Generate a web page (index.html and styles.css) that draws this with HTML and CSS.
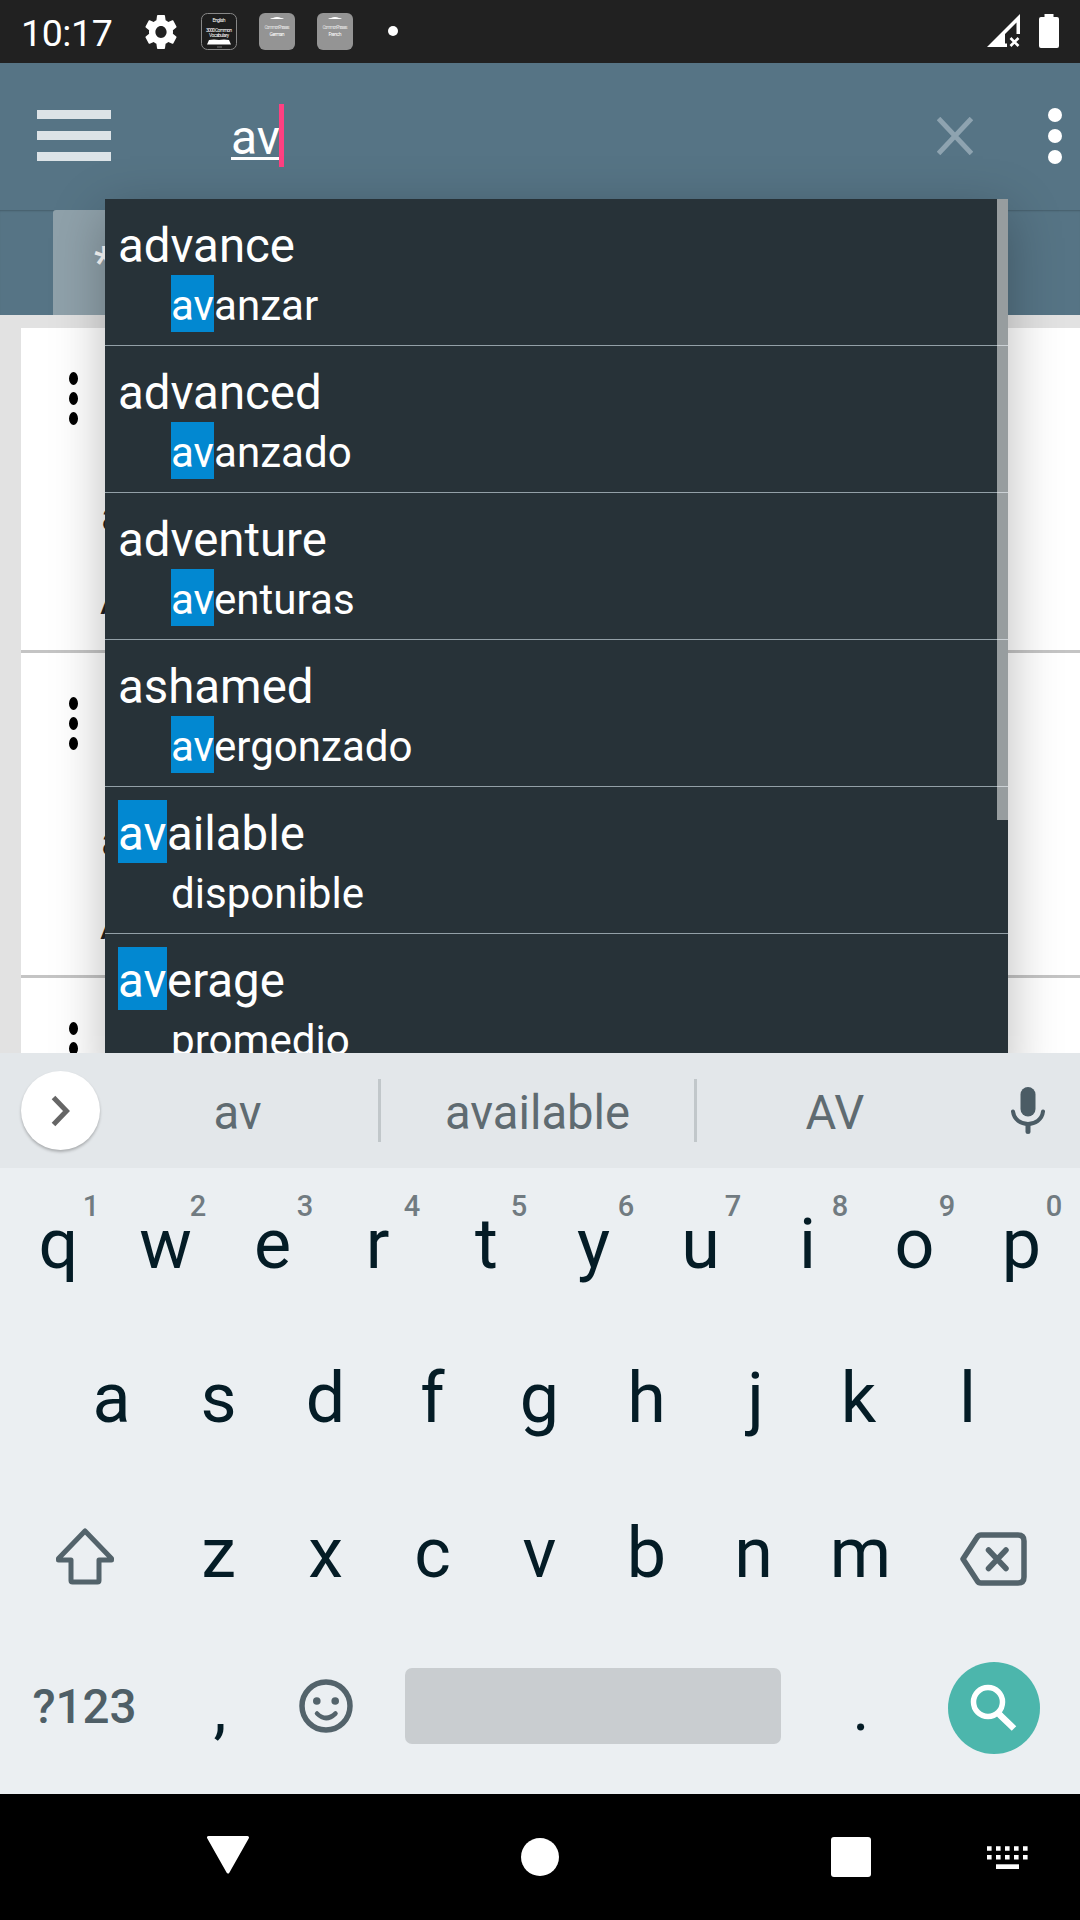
FILE: index.html
```html
<!DOCTYPE html>
<html lang="en">
<head>
<meta charset="utf-8">
<title>Vocabulary search</title>
<link rel="stylesheet" href="styles.css">
</head>
<body>
<div class="screen">
  <header class="status">
    <span class="clock">10:17</span>
    <svg class="gear" viewBox="2 2 20 20" preserveAspectRatio="none"><path fill="#fff" d="M19.43 12.98c.04-.32.07-.64.07-.98s-.03-.66-.07-.98l2.11-1.65c.19-.15.24-.42.12-.64l-2-3.46c-.12-.22-.39-.3-.61-.22l-2.49 1c-.52-.4-1.08-.73-1.69-.98l-.38-2.65C14.46 2.18 14.25 2 14 2h-4c-.25 0-.46.18-.49.42l-.38 2.65c-.61.25-1.17.59-1.69.98l-2.49-1c-.23-.09-.49 0-.61.22l-2 3.46c-.13.22-.07.49.12.64l2.11 1.65c-.04.32-.07.65-.07.98s.03.66.07.98l-2.11 1.65c-.19.15-.24.42-.12.64l2 3.46c.12.22.39.3.61.22l2.49-1c.52.4 1.08.73 1.69.98l.38 2.65c.03.24.24.42.49.42h4c.25 0 .46-.18.49-.42l.38-2.65c.61-.25 1.17-.59 1.69-.98l2.49 1c.23.09.49 0 .61-.22l2-3.46c.12-.22.07-.49-.12-.64l-2.11-1.65zM12 15.5c-1.93 0-3.5-1.57-3.5-3.5s1.57-3.5 3.5-3.5 3.5 1.57 3.5 3.5-1.57 3.5-3.5 3.5z"/></svg>
    <svg class="note" viewBox="0 0 36 37"><rect x=".5" y=".5" width="35" height="36" rx="6" fill="#1d1d1d" stroke="#888"/><g class="tiny"><text x="18" y="8.5" textLength="13">English</text><text x="18" y="18.5" textLength="26">3000 Common</text><text x="18" y="24" textLength="20">Vocabulary</text></g><path fill="#fff" d="M8 27q5-1 10 0q5-1 10 0l2 4.500H6z"/><path stroke="#777" d="M16 34h5"/></svg>
    <svg class="note" viewBox="0 0 36 37"><rect width="36" height="37" rx="6" fill="#949494"/><path fill="#fff" d="M11 6q1-1 3-1q4-2 8 0q2 0 3 1z"/><g class="tiny"><text x="18" y="15.500" textLength="25" opacity=".7">Common Phrases</text><text x="18" y="22.500" textLength="15">German</text></g></svg>
    <svg class="note" viewBox="0 0 36 37"><rect width="36" height="37" rx="6" fill="#949494"/><path fill="#fff" d="M11 6q1-1 3-1q4-2 8 0q2 0 3 1z"/><g class="tiny"><text x="18" y="15.500" textLength="25" opacity=".7">Common Phrases</text><text x="18" y="22.500" textLength="13">French</text></g></svg>
    <i class="more-dot"></i>
    <svg class="signal" viewBox="0 0 33 33"><path fill="#fff" fill-rule="evenodd" d="M33 0V20H29.500V8.500L18 20V29.500H20V33H0z"/><path stroke="#fff" stroke-width="2.600" d="M23.500 24l8 8m0-8l-8 8"/></svg>
    <svg class="battery" viewBox="0 0 20 34"><path fill="#fff" d="M5.500 0h9v3H18q2 0 2 2v27q0 2-2 2H2q-2 0-2-2V5q0-2 2-2h3.500z"/></svg>
  </header>

  <main class="app">
    <div class="toolbar">
      <div class="burger"><i></i><i></i><i></i></div>
      <div class="query"><span>av</span><i class="caret"></i></div>
      <svg class="clear" viewBox="0 0 36 38"><path stroke="#8ea3b0" stroke-width="5" d="M1.500 1.500l33 35m0-35l-33 35"/></svg>
      <div class="overflow"><i></i><i></i><i></i></div>
    </div>
    <div class="tabs"><div class="tab">*</div></div>
    <div class="list">
      <div class="entry"><div class="dots"><i></i><i></i><i></i></div><p class="word">a</p><p class="word second">A</p></div>
      <div class="entry"><div class="dots"><i></i><i></i><i></i></div><p class="word">a</p><p class="word second">A</p></div>
      <div class="entry"><div class="dots"><i></i><i></i><i></i></div></div>
    </div>
    <div class="popup">
      <div class="row"><p class="en">advance</p><p class="es"><mark>av</mark>anzar</p></div>
      <div class="row"><p class="en">advanced</p><p class="es"><mark>av</mark>anzado</p></div>
      <div class="row"><p class="en">adventure</p><p class="es"><mark>av</mark>enturas</p></div>
      <div class="row"><p class="en">ashamed</p><p class="es"><mark>av</mark>ergonzado</p></div>
      <div class="row"><p class="en"><mark>av</mark>ailable</p><p class="es">disponible</p></div>
      <div class="row"><p class="en"><mark>av</mark>erage</p><p class="es">promedio</p></div>
      <i class="thumb"></i>
    </div>
  </main>

  <section class="keyboard">
    <div class="suggest">
      <div class="expand"><svg viewBox="0 0 20 32"><path fill="none" stroke="#666" stroke-width="5" d="M2.500 2.500L15.500 16L2.500 29.500"/></svg></div>
      <span>av</span><i></i><span>available</span><i></i><span>AV</span>
      <svg class="mic" viewBox="0 0 34 48"><rect x="9.500" y="0" width="15" height="29.500" rx="7.500" fill="#4b5c65"/><path fill="none" stroke="#4b5c65" stroke-width="4" stroke-linecap="round" d="M2 24.500C4 41 30 41 32 24.500"/><path stroke="#4b5c65" stroke-width="5" stroke-linecap="round" d="M17 38v6.500"/></svg>
    </div>
    <div class="keys">
      <div class="krow ten"><b>q<sup>1</sup></b><b>w<sup>2</sup></b><b>e<sup>3</sup></b><b class="r">r<sup>4</sup></b><b>t<sup>5</sup></b><b>y<sup>6</sup></b><b>u<sup>7</sup></b><b>i<sup>8</sup></b><b>o<sup>9</sup></b><b>p<sup>0</sup></b></div>
      <div class="krow nine"><b>a</b><b>s</b><b>d</b><b>f</b><b>g</b><b>h</b><b class="j">j</b><b class="k">k</b><b>l</b></div>
      <div class="krow mixed">
        <b><svg class="shift" viewBox="0 0 60 58"><path fill="none" stroke="#53636b" stroke-width="5" stroke-linejoin="round" d="M30 4L3.500 31.500V33H16V53.500Q16 55 17.500 55H42.500Q44 55 44 53.500V33H56.500V31.500z"/></svg></b>
        <b>z</b><b>x</b><b>c</b><b>v</b><b>b</b><b>n</b><b>m</b>
        <b><svg class="back" viewBox="0 0 67 54"><path fill="none" stroke="#53636b" stroke-width="5.500" stroke-linejoin="round" d="M3 27L17 5.500Q18.500 3 21 3H58Q64 3 64 9V45Q64 51 58 51H21Q18.500 51 17 48.500zM28.500 18L46 36.500M46 18L28.500 36.500" stroke-linecap="round"/></svg></b>
      </div>
      <div class="krow bottom">
        <b class="sym">?123</b>
        <b class="comma">,</b>
        <b><svg class="smile" viewBox="0 0 54 54"><circle cx="27" cy="27" r="24" fill="none" stroke="#53636b" stroke-width="5.500"/><circle cx="17.800" cy="22" r="3.800" fill="#53636b"/><circle cx="36.200" cy="22" r="3.800" fill="#53636b"/><path fill="none" stroke="#53636b" stroke-width="4.500" stroke-linecap="round" d="M18 34.500Q27 43.500 36.500 34.500"/></svg></b>
        <b class="space"></b>
        <b class="period">.</b>
        <b class="go"><svg viewBox="0 0 92 92"><circle cx="40" cy="40" r="14.500" fill="none" stroke="#fff" stroke-width="5.500"/><path stroke="#fff" stroke-width="6.500" d="M49.500 50l3 3.500L66 66.500"/></svg></b>
      </div>
    </div>
  </section>

  <nav class="nav">
    <svg class="navback" viewBox="0 0 42 38"><path fill="#fff" stroke="#fff" stroke-width="3" stroke-linejoin="round" d="M1.500 1.500h39L21 36z"/></svg>
    <i class="home"></i>
    <i class="recent"></i>
    <svg class="ime" viewBox="0 0 41 23"><path fill="none" stroke="#fff" stroke-width="4.600" stroke-dasharray="4.600 4.400" d="M0 2.500h41M0 11.300h41"/><path fill="#fff" d="M9 18.300h23V23H9z"/></svg>
  </nav>
</div>
</body>
</html>
```
FILE: styles.css
```css
* { box-sizing: border-box; }
body { margin: 0; font-family: Roboto, "Liberation Sans", sans-serif; }
p { margin: 0; }
i { display: block; font-style: normal; }
svg { display: block; flex: none; }

.screen { width: 1080px; height: 1920px; display: flex; flex-direction: column; overflow: hidden; }

/* Status bar */
.status { height: 63px; flex: none; background: #212121; display: flex; align-items: flex-start; padding: 0 21px 0 21px; }
.clock { width: 124px; color: #fff; font-size: 37.500px; letter-spacing: -.4px; line-height: 66px; }
.gear { width: 32px; height: 34px; margin: 15px 24px 0 0; }
.note { width: 36px; height: 37px; margin: 13px 22px 0 0; }
.tiny { fill: #fff; font-size: 5px; text-anchor: middle; }
.more-dot { width: 10px; height: 10px; border-radius: 50%; background: #fff; margin: 26px auto 0 13px; }
.signal { width: 33px; height: 33px; margin: 14px 19px 0 0; }
.battery { width: 20px; height: 34px; margin-top: 14px; }

/* App */
.app { position: relative; height: 990px; flex: none; overflow: hidden; display: flex; flex-direction: column; background: #e2e2e2; }
.toolbar { height: 147px; flex: none; background: #567485; display: flex; padding-left: 37px; box-shadow: 0 1px 3px rgba(0, 0, 0, .2); }
.burger { width: 74px; margin: 47px 120px 0 0; display: flex; flex-direction: column; gap: 12px; }
.burger i { height: 9px; background: #dce3e7; }
.query { display: flex; margin-top: 41px; color: #fff; font-size: 48px; line-height: 68px; }
.query span { height: 56px; border-bottom: 3px solid #fff; }
.caret { width: 5px; height: 63px; background: #ff4081; margin-left: -1px; }
.clear { width: 36px; height: 38px; margin: 54px 75px 0 auto; }
.overflow { width: 14px; margin: 45px 18px 0 0; display: flex; flex-direction: column; gap: 7px; }
.overflow i { width: 14px; height: 14px; border-radius: 50%; background: #fff; }
.tabs { height: 105px; flex: none; background: #567485; padding-left: 53px; display: flex; box-shadow: inset 0 2px 2px -1px rgba(0, 0, 0, .2); }
.tab { width: 300px; background: #8fa1aa; border-radius: 3px 3px 0 0; color: #fff; font-size: 44px; font-weight: 500; line-height: 107px; padding-left: 41px; }
.list { margin: 13px 0 0 21px; display: flex; flex-direction: column; gap: 3px; background: #c4c4c4; flex: none; }
.entry { height: 322px; background: #fff; padding: 44px 0 0 48px; color: #222; }
.dots { display: flex; flex-direction: column; gap: 7px; height: 115px; }
.dots i { width: 9px; height: 13px; border-radius: 50%; background: #000; }
.word { font-size: 42px; line-height: 60px; padding-left: 32px; }
.second { margin-top: 23px; padding-left: 31px; }

/* Autocomplete popup, over the toolbar and the list */
.popup { position: absolute; left: 105px; top: 136px; width: 903px; height: 880px; background: #273238; box-shadow: 0 14px 50px rgba(0, 0, 0, .27); color: #fff; }
.row { height: 147px; padding: 13px 0 0 13px; border-bottom: 1px solid #93a0a7; }
.en { font-size: 47.400px; height: 63px; line-height: 68px; }
.es { font-size: 42.100px; height: 57px; line-height: 61px; padding-left: 53px; }
mark { display: inline-block; background: #0288d1; color: inherit; vertical-align: top; }
.en mark { width: 49px; height: 63px; }
.es mark { width: 43px; height: 57px; }
.thumb { position: absolute; right: 0; top: 0; width: 11px; height: 621px; background: rgba(255, 255, 255, .52); }

/* Keyboard */
.keyboard { height: 741px; flex: none; display: flex; flex-direction: column; background: #ebeff2; }
.suggest { height: 115px; background: #e3e7ea; display: flex; align-items: flex-start; padding-left: 21px; color: #5f6b71; font-size: 47.200px; line-height: 120px; }
.expand { width: 79px; height: 79px; margin: 18px -5px 0 0; border-radius: 50%; background: #fff; box-shadow: 0 2px 3px rgba(0, 0, 0, .25); display: flex; align-items: center; padding-left: 30px; }
.expand svg { width: 20px; height: 32px; }
.suggest span { width: 283px; text-align: center; padding-left: 2px; }
.suggest span:nth-of-type(2) { width: 313px; padding-left: 0; }
.suggest span:nth-of-type(3) { width: 275px; padding-left: 1px; }
.suggest i { width: 3px; height: 63px; background: #c1c7ca; margin-top: 26px; }
.mic { width: 34px; height: 48px; margin: 34px 0 0 39px; }
.keys { height: 626px; }
.krow { display: grid; height: 154.500px; color: #041c26; font-size: 70px; line-height: 152px; text-align: center; }
.krow b { position: relative; font-weight: 400; display: flex; justify-content: center; }
.ten { grid-template-columns: repeat(10, 107px); padding-left: 5px; }
.nine { grid-template-columns: repeat(9, 107px); padding-left: 58px; line-height: 151px; }
.mixed { grid-template-columns: 165px repeat(7, 107px) 166px; }
.bottom { grid-template-columns: 165px 107px 107px 428px 107px 166px; }
.krow .r, .krow .k { padding-right: 4px; }
.krow .j { padding-left: 4px; }
.krow .comma { padding-left: 3px; font-size: 66px; line-height: 153px; }
.krow .period { font-size: 64px; line-height: 154px; padding-left: 1px; }
sup { position: absolute; left: 76px; top: 24px; width: 20px; font-size: 29px; font-weight: 500; line-height: 28px; color: #717b81; }
.shift { width: 60px; height: 58px; margin: 50px 0 0 5px; }
.back { width: 67px; height: 54px; margin: 55px 0 0 -7px; }
.krow .sym { font-size: 47.500px; color: #4f5f67; font-weight: 500; padding-left: 4px; line-height: 151px; }
.smile { width: 54px; height: 54px; margin-top: 47px; }
.space { width: 376px; height: 76px; margin: 36.500px 0 0 26px; border-radius: 7px; background: #c9cdd0; }
.go svg { width: 92px; height: 92px; border-radius: 50%; background: #4cb6ac; margin: 30.500px 6px 0 0; }

/* Navigation bar */
.nav { height: 126px; flex: none; background: #000; display: flex; padding-left: 207px; }
.navback { width: 42px; height: 38px; margin: 42px 272px 0 0; }
.home { width: 38px; height: 38px; border-radius: 50%; background: #fff; margin: 44px 272px 0 0; }
.recent { width: 40px; height: 40px; border-radius: 3px; background: #fff; margin: 43px 116px 0 0; }
.ime { width: 41px; height: 23px; margin-top: 52px; }
```
